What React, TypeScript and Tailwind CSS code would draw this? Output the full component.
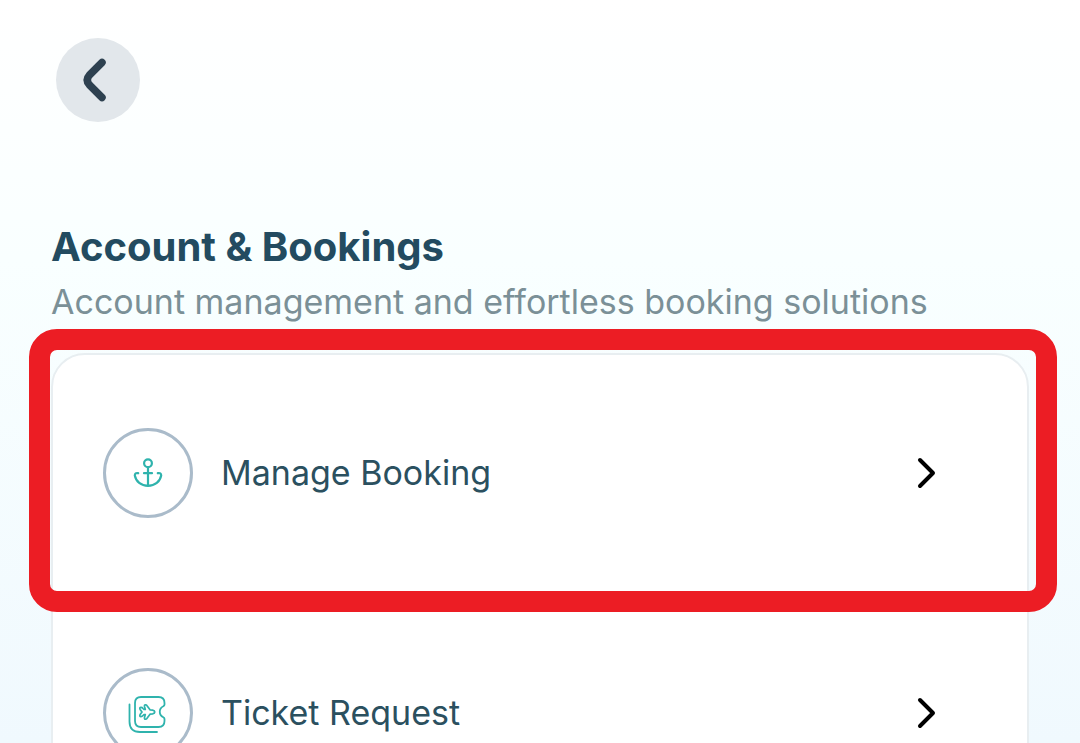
import type { ReactNode } from 'react';

function AnchorIcon() {
  return (
    <svg viewBox="0 0 32 32" className="size-8" fill="none" stroke="#2fb3ad" strokeWidth="2.200" strokeLinecap="round" strokeLinejoin="round" aria-hidden="true">
      <circle cx="16" cy="6.200" r="3.900" />
      <path d="M16 10.200v18.600M12 16.200h8M6.200 16.200Q2.800 15.500 2.800 18.500C4 24.500 9 28.800 16 28.800s12-4.300 13.200-10.300Q29.200 15.500 25.800 16.200" />
    </svg>
  );
}

function TicketIcon() {
  return (
    <svg viewBox="0 0 40 40" className="size-10" fill="none" stroke="#2fb3ad" strokeWidth="1.800" strokeLinecap="round" strokeLinejoin="round" aria-hidden="true">
      <path d="M13 4h17.500q6 0 6 6v1.500q0 1-1.200 1.700c-4.700 2.300-4.700 8.700 0 11q1.200.7 1.200 1.700V28q0 6-6 6H13q-6 0-6-6V10q0-6 6-6z" />
      <path d="M1.500 11.500v17q0 10.500 10.500 10.500h17" />
      <path d="M14 19l-1.900-2.600q-.900-1.900.9-2 1.200 0 2 1.100l1 1h1.300l-.8-3q-.3-1.900 1.300-1.700.9.200 1.400 1.100l3 4 2.400.3q2.200.4 2.200 1.800t-2.200 1.800l-2.400.3-3 4q-.5.900-1.400 1.100-1.600.2-1.300-1.700l.8-3H16l-1 1q-.8 1.100-2 1.100-1.800-.1-.9-2z" strokeWidth="1.700" />
    </svg>
  );
}

function MenuRow({ label, icon }: { label: string; icon: ReactNode }) {
  return (
    <a href="#" className="flex h-60 items-center gap-7 pr-[88px] pb-1 pl-[50px]">
      <span className="flex size-[90px] shrink-0 items-center justify-center rounded-full border-[3px] border-[#aabbca]">
        {icon}
      </span>
      <span className="flex-1 text-[34px] leading-10 text-[#2b505f]">{label}</span>
      <svg viewBox="0 0 24 34" className="h-[34px] w-6" fill="none" stroke="#000" strokeWidth="4" strokeLinecap="round" strokeLinejoin="round" aria-hidden="true">
        <path d="M5 4l13 13L5 30" />
      </svg>
    </a>
  );
}

export default function App() {
  return (
    <main className="h-screen overflow-hidden bg-linear-to-b from-white via-[#f9ffff] via-35% to-[#f0f9fe] px-[51px] pt-[38px] font-['Inter',sans-serif]">
      <button type="button" aria-label="Back" className="ml-[5px] flex size-[84px] items-center justify-center rounded-full bg-[#e2e7eb]">
        <svg viewBox="0 0 48 48" className="size-12" fill="none" stroke="#2e4150" strokeWidth="7.500" strokeLinecap="round" strokeLinejoin="round" aria-hidden="true">
          <path d="M28 6.500L15.500 19q-4.500 5 0 10L28 41.500" />
        </svg>
      </button>
      <header className="mt-[100px]">
        <h1 className="text-[40px] leading-[50px] font-bold text-[#234b60]">Account &amp; Bookings</h1>
        <p className="mt-[10px] text-[34px] leading-10 whitespace-nowrap text-[#7b9097]">
          Account management and effortless booking solutions
        </p>
      </header>
      <section className="relative mt-[31px] rounded-t-[34px] border-2 border-[#e8eef1] bg-white">
        <MenuRow label="Manage Booking" icon={<AnchorIcon />} />
        <MenuRow label="Ticket Request" icon={<TicketIcon />} />
        <div className="pointer-events-none absolute -top-[26px] -right-[30px] -left-6 h-[283px] rounded-[28px] border-[21px] border-[#ec1d24]" />
      </section>
    </main>
  );
}
